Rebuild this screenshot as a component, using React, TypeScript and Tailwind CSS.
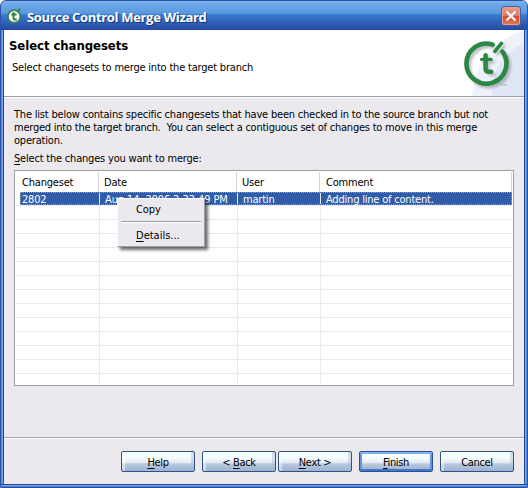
import type { ReactNode } from "react";

const rows = Array.from({ length: 13 }, (_, i) => i);

function Label({ className = "", children }: { className?: string; children: ReactNode }) {
  return <span className={`block whitespace-pre ${className}`}>{children}</span>;
}

function U({ children }: { children: ReactNode }) {
  return <span className="underline decoration-1 underline-offset-[2px]">{children}</span>;
}

function Button({ children, primary = false, className = "" }: { children: ReactNode; primary?: boolean; className?: string }) {
  const tone = primary
    ? "border-[#26519e] shadow-[inset_0_2px_0_#84b3e9,inset_0_-2px_0_#4776c5,inset_2px_0_0_#6795da,inset_-2px_0_0_#6795da]"
    : "border-[#315284] shadow-[inset_3px_0_0_#ffffff70,inset_-3px_0_0_#a9bbd270]";
  return (
    <button
      className={`flex h-[21px] w-[74px] items-center justify-center whitespace-pre rounded-[2px] border bg-[linear-gradient(#f4fdfd_0%,#f7fdff_30%,#dfe8f2_58%,#b9c9df_62%,#9eb3d0_100%)] pt-[2px] leading-[14px] tracking-[-0.35px] ${tone} ${className}`}
    >
      {children}
    </button>
  );
}

function TitleLogo() {
  return (
    <svg width="16" height="17" viewBox="0 0 16 17" className="shrink-0">
      <circle cx="7.1" cy="9.4" r="6.2" fill="#fff" stroke="#35875a" strokeWidth="1.8" />
      <path d="M10.6 4.8 13.4 1.6" stroke="#35875a" strokeWidth="2.2" />
      <path d="M6.5 5.2v5.8q0 1.5 1.5 1.5h1.8M4.4 7.6h5.2" fill="none" stroke="#248345" strokeWidth="2" />
    </svg>
  );
}

function HeaderArt() {
  return (
    <svg width="64" height="66" viewBox="460 30 64 66" className="shrink-0">
      <defs>
        <filter id="soft" x="-30%" y="-30%" width="160%" height="160%">
          <feGaussianBlur stdDeviation="1.3" />
        </filter>
      </defs>
      <path d="M524 31C496 38 475 62 472 96H524Z" fill="#edf1fa" />
      <path d="M524 43C502 54 491 72 492 96H524Z" fill="#e0e6f6" />
      <g fill="none" stroke="#77727a" strokeLinecap="round" opacity=".45" filter="url(#soft)" transform="translate(2 2.5)">
        <path d="M493 44.6A20 20 0 1 0 502.8 51.6" strokeWidth="4.5" />
        <path d="M495.8 50.6 501.5 43.6" strokeWidth="4" />
        <path d="M486 55.5v13q0 3.4 3.4 3.4h3M481.5 59.5h10" strokeWidth="3" />
      </g>
      <g fill="none" stroke="#2c8743" transform="translate(-.4 0)">
        <path d="M493 44.6A20 20 0 1 0 502.8 51.6" strokeWidth="4.6" strokeLinecap="round" />
        <path d="M495 51.6 502 43.2" stroke="#fff" strokeWidth="5.4" />
        <path d="M495.4 51.2 501.8 43.4" strokeWidth="3.8" strokeLinecap="round" />
        <path d="M486 55.2v13.2q0 3.4 3.6 3.4h2" strokeWidth="4.6" strokeLinecap="round" />
        <path d="M482 59.4h9.5" strokeWidth="3.2" strokeLinecap="round" />
      </g>
      <path d="M501 84h2m1 2v-2l1 1 1-1v2m-4-2v2" fill="none" stroke="#8bbda0" strokeWidth=".6" />
    </svg>
  );
}

export default function App() {
  return (
    <div className="h-[488px] w-[528px] overflow-hidden bg-white font-['DejaVu_Sans_Condensed','DejaVu_Sans',sans-serif] text-[11px] tracking-[-0.2px] text-black [font-stretch:condensed]">
      <div className="flex h-full flex-col overflow-hidden rounded-t-[6px] border border-[#2c4faa] bg-[linear-gradient(90deg,#4d80d2_0,#84aee7_2px,#244a9f_2px,#244a9f_3px,transparent_3px,transparent_523px,#244a9f_523px,#244a9f_524px,#84aee7_524px,#4d80d2_526px)] px-[3px] pb-[3px] shadow-[inset_0_-1px_0_#4d80d2,inset_0_-2px_0_#75a5e3,inset_0_-3px_0_#244a9f]">
        <div className="-mx-[3px] flex h-[29px] shrink-0 items-center justify-between border-b border-[#24469b] bg-[linear-gradient(#7eb5eb_0%,#6da9e8_10%,#5b98df_44%,#367bd0_49%,#346bc1_65%,#2a54aa_90%,#2850a6_100%)] pl-[6px] pr-[6px]">
          <div className="flex items-center">
            <TitleLogo />
            <Label className="ml-[4px] mt-[3px] font-['Open_Sans',sans-serif] text-[13px] font-bold leading-[18px] tracking-[-0.33px] text-white [font-stretch:normal] [text-shadow:1px_1px_0_#153878]">Source Control Merge Wizard</Label>
          </div>
          <button className="mt-[2px] flex h-5 w-5 items-center justify-center rounded-[3px] border border-[#465fa9] bg-[linear-gradient(#e6a091,#df7860_48%,#d94825_52%,#e47c61)] shadow-[inset_0_0_0_1px_#e99f8d]">
            <svg width="12" height="12" viewBox="0 0 12 12"><path d="m1.5 1.5 9 9m0-9-9 9" stroke="#fff" strokeWidth="2.2" /></svg>
          </button>
        </div>
        <header className="flex h-[66px] shrink-0 justify-between bg-white">
          <div className="pl-[5px] pt-[7px]">
            <Label className="text-[13px] font-bold leading-[17px] tracking-[-0.06px]">Select changesets</Label>
            <Label className="ml-[3px] mt-[7px] leading-[14px]">Select changesets to merge into the target branch</Label>
          </div>
          <HeaderArt />
        </header>
        <main className="flex grow flex-col border-t border-[#9d9da1] bg-[#ebe9ed] shadow-[inset_0_1px_0_#fff]">
          <div className="px-[10px] pt-[11px] leading-[13px]">
            <Label>The list below contains specific changesets that have been checked in to the source branch but not</Label>
            <Label className="tracking-[-0.23px]">merged into the target branch.  You can select a contiguous set of changes to move in this merge</Label>
            <Label>operation.</Label>
            <Label className="mt-[5px]"><U>S</U>elect the changes you want to merge:</Label>
          </div>
          <div className="relative ml-[10px] mt-[5px] h-[216px] w-[500px] border border-[#9d9da1] bg-white px-px pt-px">
            <div className="flex h-[20px] leading-[22px]">
              <Label className="w-[83px] border-r border-[#d6d5d9] pl-[6px]">Changeset</Label>
              <Label className="w-[138px] border-r border-[#d6d5d9] pl-[5px]">Date</Label>
              <Label className="w-[83px] border-r border-[#d6d5d9] pl-[5px]">User</Label>
              <Label className="w-[192px] border-r border-[#d6d5d9] pl-[6px]">Comment</Label>
            </div>
            <div className="ml-[4px] flex h-[13px] border border-dotted border-[#9aa38d] bg-[#315da8] leading-[13px] text-white">
              <Label className="w-[79px] border-r border-[#ebe9ed] pl-px">2802</Label>
              <Label className="w-[138px] border-r border-[#ebe9ed] pl-[5px] tracking-[-0.12px]">Aug 14, 2006 2:33:49 PM</Label>
              <Label className="w-[83px] border-r border-[#ebe9ed] pl-[5px]">martin</Label>
              <Label className="pl-[5px]">Adding line of content.</Label>
            </div>
            {rows.map((i) => (
              <div key={i} className={`flex border-t border-[#ebe9ed] ${i === 12 ? "h-[11px]" : "h-[14px]"}`}>
                <div className="w-[84px] border-r border-[#ebe9ed]" />
                <div className="w-[138px] border-r border-[#ebe9ed]" />
                <div className="w-[83px] border-r border-[#ebe9ed]" />
              </div>
            ))}
            <div className="absolute left-[102px] top-[27px] h-[49px] w-[88px] border border-b-[#9d9da1] border-l-[#fff] border-r-[#9d9da1] border-t-[#fff] bg-[#ebe9ed] px-[3px] shadow-[3px_3px_3px_#00000090]">
              <Label className="mt-[4px] pl-[15px] leading-[14px] tracking-[-0.05px]">Copy</Label>
              <div className="mt-[4px] h-[2px] border-t border-[#9d9da1] bg-white" />
              <Label className="mt-[6px] pl-[15px] leading-[14px] tracking-normal"><U>D</U>etails...</Label>
            </div>
          </div>
          <footer className="mt-auto flex h-[47px] border-t border-[#a5a4a8] pl-[117px] pt-[13px] shadow-[inset_0_1px_0_#fff]">
            <Button><span><U>H</U>elp</span></Button>
            <Button className="ml-[7px]"><span>&lt; <U>B</U>ack</span></Button>
            <Button className="ml-[2px]"><span><U>N</U>ext &gt;</span></Button>
            <Button primary className="ml-[7px]"><span><U>F</U>inish</span></Button>
            <Button className="ml-[7px]">Cancel</Button>
          </footer>
        </main>
      </div>
    </div>
  );
}
